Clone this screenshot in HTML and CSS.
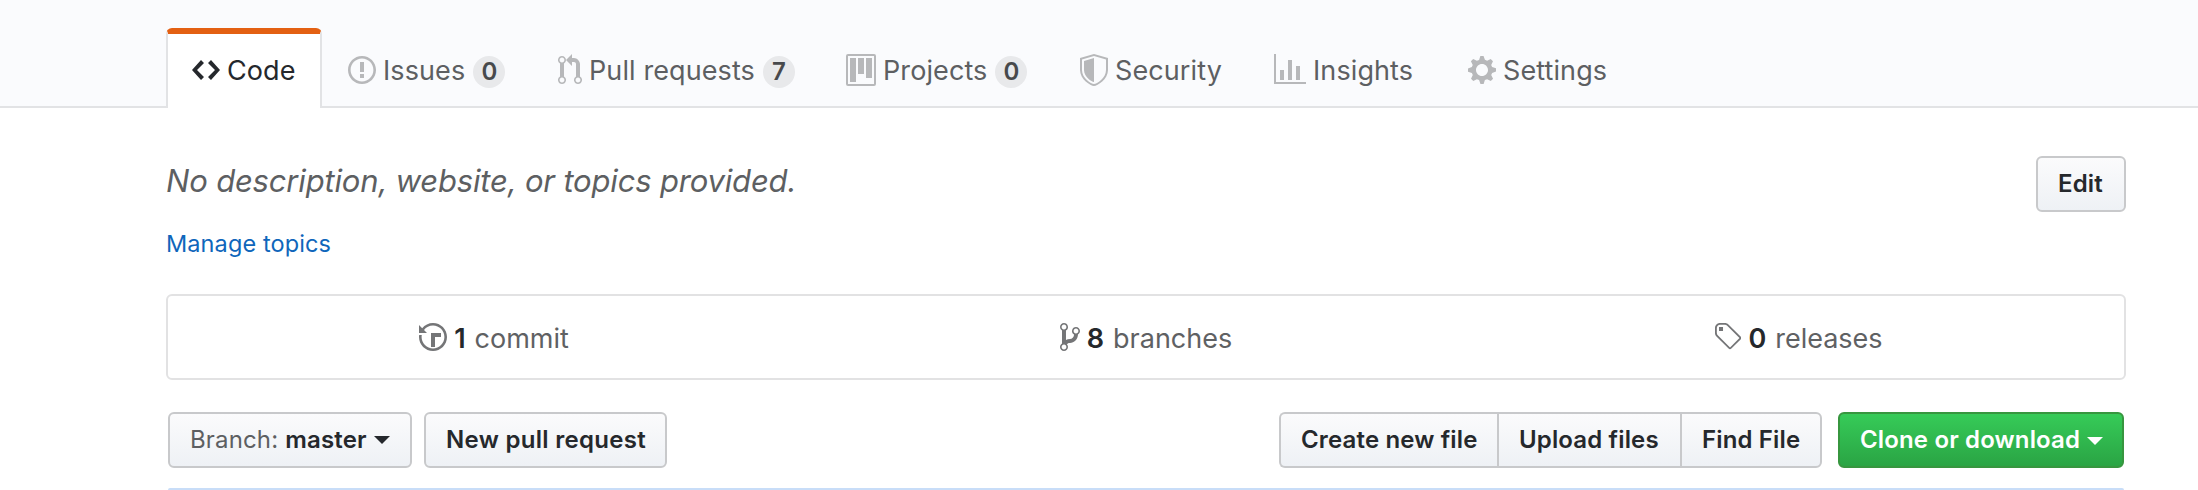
FILE: index.html
```html
<!DOCTYPE html>
<html lang="en">
<head>
<meta charset="utf-8">
<title>Repository</title>
<link rel="stylesheet" href="styles.css">
</head>
<body>
<header class="repo-head">
  <nav class="tabs">
    <a class="tab selected"><svg class="icon" width="28" height="32" viewBox="0 0 14 16"><path d="M9.5 3L8 4.5 11.5 8 8 11.5 9.5 13 14 8 9.5 3zm-5 0L0 8l4.5 5L6 11.5 2.5 8 6 4.5 4.5 3z"/></svg><span class="label">Code</span></a>
    <a class="tab"><svg class="icon" width="28" height="32" viewBox="0 0 14 16"><path d="M7 2.3c3.14 0 5.7 2.56 5.7 5.7s-2.56 5.7-5.7 5.7A5.71 5.71 0 0 1 1.3 8c0-3.14 2.56-5.7 5.7-5.7zM7 1C3.14 1 0 4.14 0 8s3.14 7 7 7 7-3.14 7-7-3.14-7-7-7zm1 3H6v5h2V4zm0 6H6v2h2v-2z"/></svg><span class="label">Issues</span><span class="counter">0</span></a>
    <a class="tab"><svg class="icon" width="24" height="32" viewBox="0 0 12 16"><path d="M11 11.28V5c-.03-.78-.34-1.47-.94-2.06C9.46 2.35 8.78 2.03 8 2H7V0L4 3l3 3V4h1c.27.02.48.11.69.31.21.2.3.42.31.69v6.28A1.993 1.993 0 0 0 10 15a1.993 1.993 0 0 0 1-3.72zm-1 2.92c-.66 0-1.2-.55-1.2-1.2 0-.65.55-1.2 1.2-1.2.65 0 1.2.55 1.2 1.2 0 .65-.55 1.2-1.2 1.2zM4 3c0-1.11-.89-2-2-2a1.993 1.993 0 0 0-1 3.72v6.56A1.993 1.993 0 0 0 2 15a1.993 1.993 0 0 0 1-3.72V4.72c.59-.34 1-.98 1-1.72zm-.8 10c0 .66-.55 1.2-1.2 1.2-.65 0-1.2-.55-1.2-1.2 0-.65.55-1.2 1.2-1.2.65 0 1.2.55 1.2 1.2zM2 4.2C1.34 4.2.8 3.65.8 3c0-.65.55-1.2 1.2-1.2.65 0 1.2.55 1.2 1.2 0 .65-.55 1.2-1.2 1.2z"/></svg><span class="label">Pull requests</span><span class="counter">7</span></a>
    <a class="tab"><svg class="icon" width="30" height="32" viewBox="0 0 15 16"><path d="M10 12h3V2h-3v10zm-4-2h3V2H6v8zm-4 4h3V2H2v12zm-1 1h13V1H1v14zM14 0H1a1 1 0 0 0-1 1v14a1 1 0 0 0 1 1h13a1 1 0 0 0 1-1V1a1 1 0 0 0-1-1z" fill-rule="evenodd"/></svg><span class="label">Projects</span><span class="counter">0</span></a>
    <a class="tab"><svg class="icon" width="28" height="32" viewBox="0 0 14 16"><path fill-rule="evenodd" d="M0 2l7-2 7 2v6.02C14 12.69 8.69 16 7 16c-1.69 0-7-3.31-7-7.98V2zm1 .75L7 1l6 1.75v5.268C13 12.104 8.449 15 7 15c-1.449 0-6-2.896-6-6.982V2.75zm1 .75L7 2v12c-1.207 0-5-2.482-5-5.985V3.5z"/></svg><span class="label">Security</span></a>
    <a class="tab"><svg class="icon" width="32" height="32" viewBox="0 0 16 16"><path d="M16 14v1H0V0h1v14h15zM5 13H3V8h2v5zm4 0H7V3h2v10zm4 0h-2V6h2v7z"/></svg><span class="label">Insights</span></a>
    <a class="tab"><svg class="icon" width="28" height="32" viewBox="0 0 14 16"><path fill-rule="evenodd" d="M14 8.77v-1.6l-1.94-.64-.45-1.09.88-1.84-1.13-1.13-1.81.91-1.09-.45-.69-1.92h-1.6l-.63 1.94-1.11.45-1.84-.88-1.13 1.13.91 1.81-.45 1.09L0 7.23v1.59l1.94.64.45 1.09-.88 1.84 1.13 1.13 1.81-.91 1.09.45.69 1.92h1.59l.63-1.94 1.11-.45 1.84.88 1.13-1.13-.92-1.81.47-1.09L14 8.75v.02zM7 11c-1.66 0-3-1.34-3-3s1.34-3 3-3 3 1.34 3 3-1.34 3-3 3z"/></svg><span class="label">Settings</span></a>
  </nav>
</header>
<main class="content">
  <section class="about">
    <div>
      <p class="description">No description, website, or topics provided.</p>
      <a class="topics">Manage topics</a>
    </div>
    <button class="btn edit">Edit</button>
  </section>
  <ul class="stats">
    <li class="stat"><svg class="icon" width="28" height="32" viewBox="0 0 14 16"><path d="M8 13H6V6h5v2H8v5zM7 1C4.81 1 2.87 2.02 1.59 3.59L0 2v4h4L2.5 4.5C3.55 3.17 5.17 2.3 7 2.3c3.14 0 5.7 2.56 5.7 5.7s-2.56 5.7-5.7 5.7A5.71 5.71 0 0 1 1.3 8c0-.34.03-.67.09-1H.08C.03 7.33 0 7.66 0 8c0 3.86 3.14 7 7 7s7-3.14 7-7-3.14-7-7-7z"/></svg><b>1</b><span>commit</span></li>
    <li class="stat"><svg class="icon" width="20" height="32" viewBox="0 0 10 16"><path fill-rule="evenodd" d="M10 5c0-1.11-.89-2-2-2a1.993 1.993 0 0 0-1 3.72v.3c-.02.52-.23.98-.63 1.38-.4.4-.86.61-1.38.63-.83.02-1.48.16-2 .45V4.72a1.993 1.993 0 0 0-1-3.72C.88 1 0 1.89 0 3a2 2 0 0 0 1 1.72v6.56c-.59.35-1 .99-1 1.72 0 1.11.89 2 2 2 1.11 0 2-.89 2-2 0-.53-.2-1-.53-1.36.09-.06.48-.41.59-.47.25-.11.56-.17.94-.17 1.05-.05 1.95-.45 2.75-1.25S8.95 7.77 9 6.73h-.02C9.59 6.37 10 5.73 10 5zM2 1.8c.66 0 1.2.55 1.2 1.2 0 .65-.55 1.2-1.2 1.2C1.35 4.2.8 3.65.8 3c0-.65.55-1.2 1.2-1.2zm0 12.41c-.66 0-1.2-.55-1.2-1.2 0-.65.55-1.2 1.2-1.2.65 0 1.2.55 1.2 1.2 0 .65-.55 1.2-1.2 1.2zm6-8c-.66 0-1.2-.55-1.2-1.2 0-.65.55-1.2 1.2-1.2.65 0 1.2.55 1.2 1.2 0 .65-.55 1.2-1.2 1.2z"/></svg><b>8</b><span>branches</span></li>
    <li class="stat"><svg class="icon" width="28" height="32" viewBox="0 0 14 16"><path fill-rule="evenodd" d="M7.73 1.73C7.26 1.26 6.62 1 5.96 1H3.5C2.13 1 1 2.13 1 3.5v2.47c0 .66.27 1.3.73 1.77l6.06 6.06c.39.39 1.02.39 1.41 0l4.59-4.59a.996.996 0 0 0 0-1.41L7.73 1.73zM2.38 7.09c-.31-.3-.47-.7-.47-1.13V3.5c0-.88.72-1.59 1.59-1.59h2.47c.42 0 .83.16 1.13.47l6.14 6.13-4.73 4.73-6.13-6.15zM3.01 3h2v2H3V3h.01z"/></svg><b>0</b><span>releases</span></li>
  </ul>
  <div class="actions">
    <button class="btn branch"><span class="muted">Branch:</span> master<i class="caret"></i></button>
    <button class="btn new-pr">New pull request</button>
    <div class="group">
      <button class="btn create">Create new file</button>
      <button class="btn upload">Upload files</button>
      <button class="btn find">Find File</button>
    </div>
    <button class="btn primary">Clone or download<i class="caret"></i></button>
  </div>
  <div class="commit-bar"></div>
</main>
</body>
</html>
```
FILE: styles.css
```css
* { box-sizing: border-box; }

body {
  margin: 0;
  background: #fff;
  color: #25282c;
  font-family: Inter, "Liberation Sans", sans-serif;
}

.icon { flex: none; fill: currentColor; }

.repo-head {
  height: 108px;
  padding: 28px 0 0 166px;
  background: #fafbfd;
  border-bottom: 2px solid #e2e3e5;
}

.tabs {
  display: grid;
  grid-template-columns: 156px 210px 288px 234px 194px 194px 200px;
  height: 80px;
}

.tab {
  display: flex;
  align-items: center;
  padding: 4px 0 0 26px;
  color: #5d5f62;
  font-size: 27px;
  line-height: 36px;
  white-space: nowrap;
}

.tab .icon { fill: #b7b8ba; }
.label { margin-left: 7px; padding-top: 2px; letter-spacing: 0.1px; }

.tab.selected {
  padding: 0 0 2px 24px;
  background: #fff;
  border: 2px solid #e2e3e5;
  border-top: 6px solid #e36012;
  border-bottom: 0;
  border-radius: 6px 6px 0 0;
  color: #25282c;
}

.tab.selected .icon { fill: #25282c; }

.counter {
  width: 32px;
  height: 32px;
  margin: 4px 0 0 8px;
  border-radius: 16px;
  background: #e8e9eb;
  color: #47494c;
  font-size: 24px;
  font-weight: 600;
  line-height: 32px;
  text-align: center;
}

.content { width: 1960px; margin-left: 166px; }

.about {
  display: flex;
  justify-content: space-between;
  height: 186px;
  padding-top: 48px;
}

.description {
  margin: 0;
  padding-top: 1px;
  color: #5d5f62;
  font-size: 31px;
  font-style: italic;
  line-height: 48px;
  letter-spacing: -0.18px;
}

.topics {
  display: block;
  margin-top: 21px;
  color: #0f66bb;
  font-size: 23.5px;
  line-height: 36px;
  letter-spacing: 0.1px;
}

.btn {
  display: flex;
  align-items: center;
  flex: none;
  height: 56px;
  padding: 0 0 0 20px;
  border: 2px solid #c8c9cb;
  border-radius: 6px;
  background: linear-gradient(#fbfbfc, #eef1f5);
  color: #25282c;
  font: 600 24px/36px Inter, "Liberation Sans", sans-serif;
  letter-spacing: 0.15px;
  white-space: nowrap;
}

.edit { width: 90px; }

.stats {
  display: grid;
  grid-template-columns: repeat(3, 1fr);
  height: 86px;
  margin: 0;
  padding: 0;
  border: 2px solid #e2e2e3;
  border-radius: 6px;
  list-style: none;
}

.stat {
  display: flex;
  align-items: center;
  justify-content: center;
  color: #5f6163;
  font-size: 27px;
}

.stat .icon { fill: #747577; }
.stat b, .stat span { padding-top: 2px; }
.stat b { margin: 0 9px 0 7px; color: #25282c; font-weight: 600; }

.actions {
  display: flex;
  padding: 32px 2px 0;
}

.branch { width: 244px; }
.muted { margin-right: 7px; color: #5d5f62; font-weight: 400; }
.new-pr { width: 243px; margin-left: 12px; letter-spacing: 0.3px; }

.caret {
  margin: 0 0 0 7px;
  border: 8px solid transparent;
  border-top-color: currentColor;
  border-bottom: 0;
}

.group { display: flex; margin-left: auto; }
.group .btn { border-radius: 0; }
.group .create { width: 218px; border-radius: 6px 0 0 6px; border-right: 0; }
.group .upload { width: 183px; border-right: 0; }
.group .find { width: 142px; border-radius: 0 6px 6px 0; }

.primary {
  width: 286px;
  margin-left: 16px;
  border-color: #37963f;
  background: linear-gradient(#36cb58, #2aa444);
  color: #fff;
}

.primary .caret { margin-top: 2px; }

.commit-bar {
  height: 2px;
  margin: 20px 2px 0;
  border-radius: 2px 2px 0 0;
  background: #c8ddf8;
}
```
